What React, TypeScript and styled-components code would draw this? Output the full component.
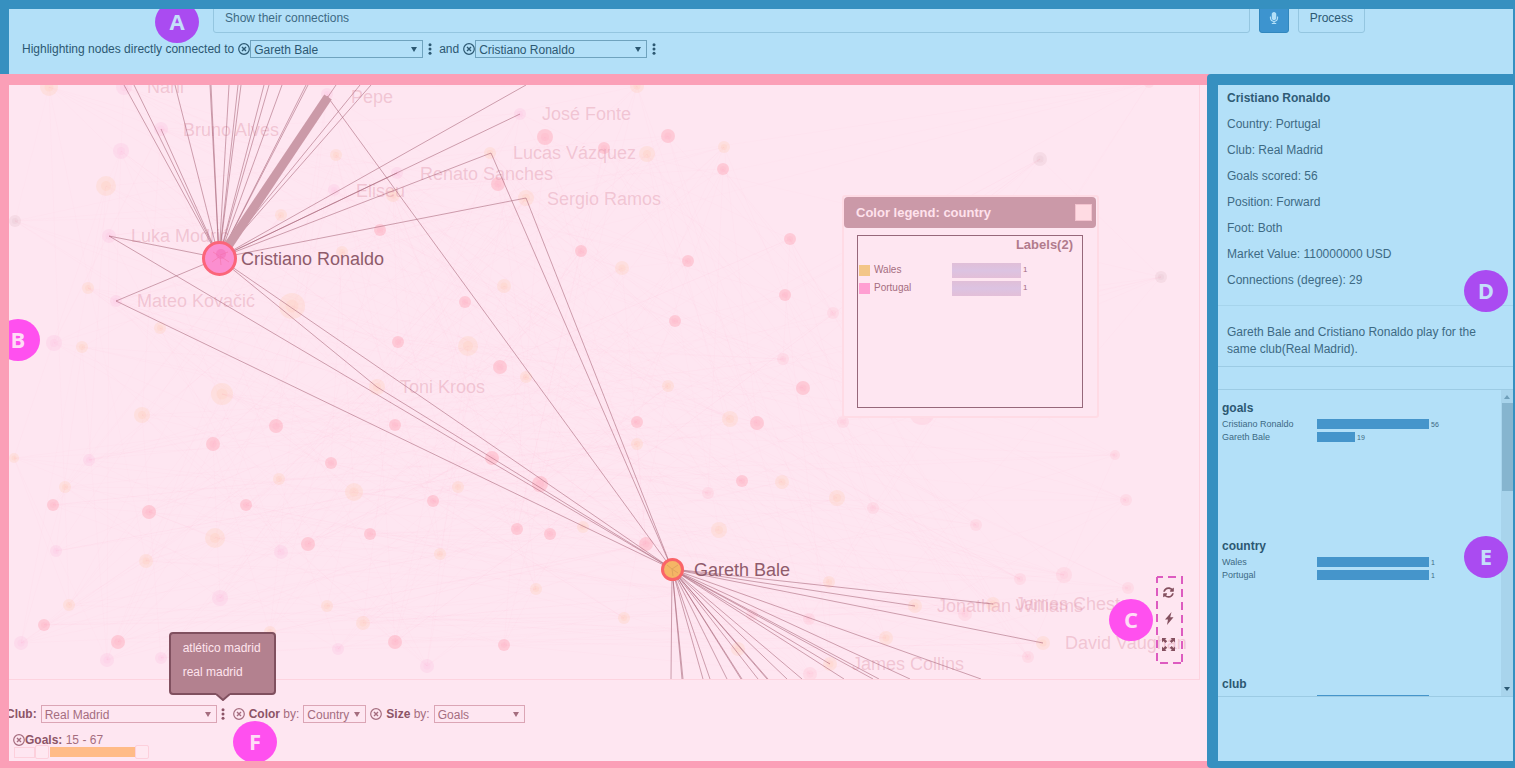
import React, { useState } from 'react';
import styled, { createGlobalStyle, css } from 'styled-components';
import { FaMicrophone, FaSyncAlt } from 'react-icons/fa';

const c = {
  blue: '#b3e0f8',
  blueEdge: '#3690c0',
  blueText: '#3d6a84',
  blueDark: '#2c5872',
  bar: '#4595cb',
  pink: '#fee6f1',
  pinkEdge: '#fb9fb7',
  pinkLine: '#fdd3df',
  pinkText: '#a56d7f',
  pinkDark: '#8c5466',
};

const GlobalStyle = createGlobalStyle`
  *, *::before, *::after { box-sizing: border-box; }
  body {
    margin: 0;
    font-family: "Liberation Sans", Arial, sans-serif;
    font-size: 12px;
    line-height: 18px;
  }
  button, input, select { font: inherit; color: inherit; margin: 0; }
`;

const Page = styled.div`
  display: flex;
  flex-direction: column;
  height: 100vh;
  overflow: hidden;
`;

const Header = styled.header`
  position: relative;
  flex: none;
  height: 74px;
  overflow: hidden;
  border: solid ${c.blueEdge};
  border-width: 9px 2px 0 9px;
  background: ${c.blue};
  color: ${c.blueDark};
`;

const QueryBar = styled.form`
  display: flex;
  gap: 9px;
  margin: -6px 148px 7px 204px;
`;

const QueryInput = styled.input`
  flex: 1;
  min-width: 0;
  height: 30px;
  padding: 0 11px;
  border: 1px solid #94c6e0;
  border-radius: 3px;
  background: transparent;
  color: ${c.blueText};
  outline: none;
`;

const MicButton = styled.button`
  display: flex;
  align-items: center;
  justify-content: center;
  width: 30px;
  height: 30px;
  padding: 0;
  border: 1px solid #3187be;
  border-radius: 3px;
  background: #3d94cf;
  color: ${c.blue};
`;

const ProcessButton = styled.button`
  height: 30px;
  padding: 0 11px;
  border: 1px solid #94c6e0;
  border-radius: 3px;
  background: transparent;
`;

const Line = styled.div`
  display: flex;
  align-items: center;
  height: 18px;
  white-space: nowrap;
`;

const HighlightLine = styled(Line)`
  gap: 3px;
  padding-left: 13px;
`;

const FilterLine = styled(Line)`
  gap: 4px;
  margin-left: -3px;
`;

const Lead = styled.span`
  padding-right: 1px;
`;

const Phrase = styled.span`
  padding: 0 1px 0 3px;
`;

const Pick = styled.span<{ $w: number; $edge: string }>`
  position: relative;
  flex: none;
  width: ${(p) => p.$w}px;
  height: 18px;
  border: 1px solid ${(p) => p.$edge};
  &::after {
    content: '';
    position: absolute;
    top: 6px;
    right: 5px;
    border: 3px solid transparent;
    border-top: 5px solid currentColor;
    border-bottom: 0;
    pointer-events: none;
  }
`;

const PickSelect = styled.select`
  display: block;
  width: 100%;
  height: 16px;
  padding: 0 3px;
  border: 0;
  border-radius: 0;
  background: transparent;
  appearance: none;
  outline: none;
`;

const IconButton = styled.button`
  display: flex;
  flex: none;
  align-items: center;
  justify-content: center;
  padding: 0;
  border: 0;
  background: none;
`;

const RemoveButton = styled(IconButton)`
  width: 12px;
  height: 12px;
`;

const TightRemove = styled(RemoveButton)`
  margin-right: -3px;
`;

const DotsButton = styled(IconButton)`
  width: 7px;
  height: 12px;
`;

const Badge = styled.span<{ $tone: 'violet' | 'pink' }>`
  position: absolute;
  z-index: 3;
  width: 44px;
  height: 42px;
  border-radius: 50%;
  font: 700 22px/40px "Open Sans", "Noto Sans", sans-serif;
  text-align: center;
  ${(p) =>
    p.$tone === 'violet'
      ? css`background: #aa4bf1; color: #c4def9;`
      : css`background: #ff50ef; color: #ffdcf6;`}
`;
const BadgeA = styled(Badge)`left: 146px; top: -8px;`;
const BadgeB = styled(Badge)`left: -13px; top: 234px;`;
const BadgeC = styled(Badge)`right: 46px; bottom: 38px;`;
const BadgeD = styled(Badge)`right: 5px; top: 185px;`;
const BadgeE = styled(Badge)`right: 5px; top: 451px;`;
const BadgeF = styled(Badge)`left: 224px; bottom: -2px;`;

const Main = styled.main`
  display: flex;
  flex: 1;
  min-height: 0;
  background: ${c.pinkEdge};
`;

const GraphPanel = styled.section`
  position: relative;
  display: flex;
  flex: 1;
  flex-direction: column;
  min-width: 0;
  overflow: hidden;
  border: solid ${c.pinkEdge};
  border-width: 11px 0 7px 9px;
  background: ${c.pink};
  color: ${c.pinkText};
`;

const Canvas = styled.div`
  position: relative;
  flex: 1;
  min-height: 0;
  margin-right: 7px;
  border: solid ${c.pinkLine};
  border-width: 0 1px 1px 0;
`;

const Graph = styled.svg`
  display: block;
  width: 100%;
  height: 100%;
`;

const Legend = styled.aside`
  position: absolute;
  z-index: 2;
  top: 110px;
  right: 100px;
  width: 257px;
  border: 2px solid #ffdbe5;
  border-radius: 3px;
  background: ${c.pink};
`;

const LegendTitle = styled.h2`
  display: flex;
  align-items: center;
  justify-content: space-between;
  height: 31px;
  margin: 0 1px 7px 0;
  padding: 0 4px 0 12px;
  border-radius: 4px;
  background: #cb99a8;
  color: #ffe2ec;
  font-size: 13px;
`;

const CloseButton = styled.button`
  width: 17px;
  height: 17px;
  padding: 0;
  border: 1px solid #f3c3cf;
  background: #ffdbe3;
`;

const LegendBox = styled.div`
  height: 173px;
  margin: 0 14px 8px 13px;
  border: 1px solid #96687a;
`;

const LegendHead = styled.h3`
  margin: 0 9px 7px 0;
  font-size: 13px;
  line-height: 18px;
  text-align: right;
  color: #b27b8c;
`;

const LegendRow = styled.div`
  display: flex;
  align-items: center;
  height: 18px;
  padding-left: 1px;
  font-size: 10px;
`;

const Swatch = styled.span<{ $fill: string }>`
  width: 11px;
  height: 11px;
  margin-right: 4px;
  background: ${(p) => p.$fill};
`;

const LegendName = styled.span`
  width: 78px;
`;

const LegendBar = styled.span`
  width: 69px;
  height: 15px;
  margin-right: 2px;
  background: linear-gradient(#e0bfd8, #dcc3e2 50%, #e3bfd8);
`;

const SmallValue = styled.span`
  font-size: 8px;
`;

const Tools = styled.div`
  position: absolute;
  z-index: 2;
  right: 16px;
  bottom: 15px;
  display: flex;
  flex-direction: column;
  align-items: center;
  gap: 11px;
  width: 28px;
  height: 88px;
  padding: 9px 1px 0 0;
  color: #84505f;
`;

const ToolsFrame = styled.svg`
  position: absolute;
  inset: 0;
`;

const ToolButton = styled(IconButton)`
  position: relative;
  width: 16px;
  height: 15px;
`;

const Filters = styled.footer`
  flex: none;
  padding: 25px 0 2px;
`;

const Strong = styled.b`
  color: ${c.pinkDark};
`;

const MenuAnchor = styled.span`
  position: relative;
  display: flex;
  width: 12px;
  justify-content: center;
  margin: 0 0 0 -4px;
  color: ${c.pinkDark};
`;

const Menu = styled.div`
  position: absolute;
  z-index: 4;
  bottom: 25px;
  left: -48px;
  width: 107px;
  height: 63px;
  padding: 2px 0 0 12px;
  border: 2px solid #80505f;
  border-radius: 4px;
  background: #b3818f;
  color: #ffe4ed;
  line-height: 24px;
`;

const MenuList = styled.ul`
  margin: 0;
  padding: 0;
  list-style: none;
`;

const MenuTail = styled.svg`
  position: absolute;
  top: 59px;
  left: 45px;
`;

const GoalsLine = styled(Line)`
  gap: 3px;
  margin: 8px 0 -4px;
  padding-left: 4px;
`;

const RangeTrack = styled.div`
  position: relative;
  display: flex;
  align-items: center;
  width: 135px;
  height: 14px;
  margin-left: 5px;
`;

const RangeRail = styled.span`
  width: 21px;
  height: 11px;
  border: 1px solid #fdd0dc;
`;

const RangeFill = styled.span`
  width: 85px;
  height: 10px;
  margin-left: 15px;
  background: #ffbb87;
`;

const RangeInput = styled.input`
  position: absolute;
  inset: 0;
  width: 100%;
  height: 14px;
  background: transparent;
  appearance: none;
  pointer-events: none;
  &::-webkit-slider-thumb {
    width: 14px;
    height: 14px;
    border: 1px solid #fdd0dc;
    border-radius: 2px;
    background: #ffe8f1;
    appearance: none;
    pointer-events: auto;
  }
`;

const Side = styled.aside`
  position: relative;
  display: flex;
  flex: none;
  flex-direction: column;
  width: 308px;
  overflow: hidden;
  border: solid ${c.blueEdge};
  border-width: 11px 2px 7px 11px;
  border-radius: 4px 0 0 4px;
  background: ${c.blue};
  color: ${c.blueText};
`;

const Facts = styled.ul`
  margin: 0 0 12px;
  padding: 0 0 0 9px;
  list-style: none;
  line-height: 26px;
`;

const FactTitle = styled.li`
  font-weight: 700;
  color: #2f5b75;
`;

const Note = styled.p`
  margin: 0 0 22px;
  padding: 18px 9px 8px;
  border: solid #9ccbe4;
  border-width: 1px 0;
  border-top-color: #a6d4ec;
  line-height: 17px;
`;

const ChartScroll = styled.div`
  display: flex;
  flex: 1;
  min-height: 0;
  margin-bottom: 64px;
  border: solid #9ccbe4;
  border-width: 1px 0;
`;

const ChartList = styled.div`
  flex: 1;
  min-width: 0;
  padding-left: 4px;
  overflow: hidden;
`;

const ScrollBar = styled.div`
  display: flex;
  flex: none;
  flex-direction: column;
  justify-content: space-between;
  width: 12px;
  background: #a8d4ec;
`;

const ScrollThumb = styled.div`
  flex: 0 0 88px;
  margin-left: 1px;
  background: #86b5cf;
`;

const ScrollSpace = styled.div`
  flex: 1;
`;

const ScrollArrow = styled.svg`
  flex: none;
  display: block;
  width: 12px;
  height: 13px;
`;

const ChartBlock = styled.section`
  height: 138px;
  padding-top: 9px;
`;

const ChartTitle = styled.h3`
  margin: 0;
  font-size: 12px;
  line-height: 18px;
  color: ${c.blueDark};
`;

const ChartRow = styled.div`
  display: flex;
  align-items: center;
  height: 13px;
  font-size: 9px;
  line-height: 13px;
`;

const ChartName = styled.span`
  width: 95px;
  padding-top: 2px;
`;

const ChartBar = styled.span`
  height: 10px;
  margin-right: 2px;
  background: ${c.bar};
`;

const ChartValue = styled.span`
  padding-top: 2px;
  font-size: 7px;
`;

type Node = [number, number, number];

const redNodes: Node[] = [
  [545, 137, 8], [604, 148, 6], [668, 136, 7], [723, 169, 6], [498, 184, 7], [380, 230, 6],
  [790, 239, 6], [581, 251, 6], [688, 261, 6], [465, 302, 6], [785, 295, 6], [398, 342, 6],
  [675, 321, 6], [500, 367, 7], [803, 388, 7], [395, 425, 6], [637, 422, 6], [757, 423, 7],
  [276, 426, 7], [213, 444, 7], [331, 463, 6], [492, 458, 7], [540, 484, 8], [742, 481, 6],
  [53, 505, 6], [149, 512, 7], [246, 505, 6], [433, 501, 6], [517, 529, 6], [550, 534, 6],
  [370, 534, 6], [308, 544, 7], [646, 544, 7], [44, 625, 6], [118, 642, 7], [395, 642, 7],
  [504, 645, 6],
];
const roseNodes: Node[] = [
  [833, 313, 6], [783, 359, 6], [843, 422, 6], [922, 412, 13], [708, 493, 6], [873, 508, 6],
  [976, 525, 6], [1115, 455, 5], [1126, 500, 6], [1020, 579, 6], [1064, 575, 8], [1128, 588, 6],
  [1028, 657, 6], [809, 619, 6], [752, 615, 6], [810, 674, 7], [965, 614, 7], [1149, 83, 5],
];
const magentaNodes: Node[] = [
  [124, 87, 8], [161, 129, 7], [121, 151, 8], [109, 236, 7], [116, 301, 6], [54, 343, 8],
  [89, 460, 6], [56, 551, 6], [281, 552, 7], [220, 598, 8], [21, 643, 7], [107, 660, 7],
  [161, 658, 6], [338, 649, 6], [427, 666, 7], [397, 173, 6], [334, 190, 6], [520, 114, 6],
  [327, 94, 6],
];
const orangeNodes: Node[] = [
  [49, 87, 9], [106, 186, 10], [336, 155, 6], [393, 195, 7], [281, 215, 6], [342, 252, 6],
  [490, 153, 6], [526, 198, 8], [637, 86, 7], [647, 154, 8], [724, 147, 6], [622, 268, 7],
  [504, 286, 7], [468, 346, 10], [292, 306, 13], [88, 288, 6], [82, 347, 6], [160, 328, 6],
  [222, 394, 11], [142, 415, 8], [377, 387, 8], [14, 458, 5], [65, 487, 6], [279, 479, 6],
  [354, 492, 9], [458, 487, 6], [526, 377, 6], [668, 386, 6], [730, 419, 8], [637, 444, 6],
  [782, 482, 7], [837, 498, 8], [215, 538, 10], [146, 561, 7], [440, 554, 6], [583, 527, 6],
  [719, 530, 8], [536, 589, 6], [624, 618, 6], [829, 582, 6], [69, 605, 6], [327, 606, 6],
  [363, 623, 7], [915, 606, 7], [993, 604, 7], [1043, 643, 7], [830, 664, 7], [886, 638, 7],
  [738, 649, 7], [270, 632, 6],
];
const greyNodes: Node[] = [[1040, 159, 7], [1161, 277, 6], [15, 221, 6]];

const groups: { fill: string; opacity: number; core: number; nodes: Node[] }[] = [
  { fill: '#ff9fb2', opacity: 0.4, core: 0.12, nodes: redNodes },
  { fill: '#ffb0c4', opacity: 0.2, core: 0.12, nodes: roseNodes },
  { fill: '#fba4d6', opacity: 0.17, core: 0.1, nodes: magentaNodes },
  { fill: '#ffc089', opacity: 0.17, core: 0.12, nodes: orangeNodes },
  { fill: '#c49aa4', opacity: 0.14, core: 0.1, nodes: greyNodes },
];

const ronaldo: [number, number] = [219, 258];
const bale: [number, number] = [672, 569];
const shared: [number, number][] = [[109, 236], [116, 301], [377, 387], [491, 153], [526, 198]];

const ronaldoEnds: [number, number][] = [
  [124, 85], [134, 85], [161, 129], [175, 85], [210, 85], [211, 85], [229, 85], [238, 85],
  [241, 85], [264, 85], [269, 85], [282, 85], [306, 85], [308, 85], [336, 85], [360, 85],
  [371, 85], [526, 85], [520, 114], [397, 173], ...shared, bale,
];
const baleEnds: [number, number][] = [
  [327, 96], ...shared, [915, 606], [993, 604], [1043, 643], [830, 664], [671, 679],
  [682, 679], [683, 679], [703, 679], [710, 679], [727, 679], [741, 679], [742, 679],
  [758, 679], [767, 679], [768, 679], [787, 679], [802, 679], [844, 679], [873, 679],
  [879, 679], [910, 679], [981, 679],
];

const labels: [string, number, number][] = [
  ['Nani', 147, 87], ['Bruno Alves', 183, 130], ['Pepe', 351, 97], ['José Fonte', 542, 114],
  ['Lucas Vázquez', 513, 153], ['Renato Sanches', 420, 174], ['Eliseu', 356, 191],
  ['Sergio Ramos', 547, 199], ['Luka Modrić', 131, 236], ['Mateo Kovačić', 137, 301],
  ['Toni Kroos', 400, 387], ['Jonathan Williams', 937, 606], ['James Chester', 1015, 604],
  ['David Vaughan', 1065, 643], ['James Collins', 852, 664],
];

const allNodes = groups.flatMap((g) => g.nodes);
const webEdges = allNodes.flatMap((a, i) =>
  [7, 19, 31, 44].map((step) => [a, allNodes[(i * 3 + step) % allNodes.length]] as const),
);

function NetworkGraph() {
  return (
    <Graph role="img" aria-label="Network of football players">
      <g transform="translate(-9 -85)">
        <g stroke="#f3a5b9" strokeOpacity="0.03">
          {webEdges.map(([a, b], i) => (
            <line key={i} x1={a[0]} y1={a[1]} x2={b[0]} y2={b[1]} />
          ))}
        </g>
        {groups.map((g) => (
          <g key={g.fill} fill={g.fill}>
            {g.nodes.map(([x, y, r]) => (
              <g key={`${x}-${y}`}>
                <circle cx={x} cy={y} r={r} opacity={g.opacity} />
                <circle cx={x} cy={y} r={r / 2} opacity={g.core} />
              </g>
            ))}
          </g>
        ))}
        <g fontSize="18" fill="#dc8ea3" fillOpacity="0.38">
          {labels.map(([name, x, y]) => (
            <text key={name} x={x} y={y + 6}>{name}</text>
          ))}
        </g>
        <g stroke="#a9687a" strokeOpacity="0.58">
          {ronaldoEnds.map(([x, y]) => (
            <line key={`r${x}-${y}`} x1={ronaldo[0]} y1={ronaldo[1]} x2={x} y2={y} />
          ))}
          {baleEnds.map(([x, y]) => (
            <line key={`b${x}-${y}`} x1={bale[0]} y1={bale[1]} x2={x} y2={y} />
          ))}
        </g>
        <line x1="220" y1="258" x2="328" y2="97" stroke="#cb9aa8" strokeWidth="9" />
        <circle cx="219.5" cy="258.5" r="16" fill="#fb8fd0" stroke="#fb6579" strokeWidth="3" />
        <path d="M219 256l-6-4m7 3l8-3m-8 4l1 9m-1-9l9 6m-10-5l-7 5" stroke="#f77fb8" fill="none" />
        <circle cx="221" cy="254" r="5" fill="#f46cb4" opacity="0.5" />
        <circle cx="672.5" cy="569.5" r="10" fill="#f5b565" stroke="#fa6468" strokeWidth="3" />
        <path d="M672 569l-5-4m5 4l6-4m-6 4l1 7m-1-7l6 4" stroke="#e0a45e" fill="none" />
        <g fontSize="18" fill="#8f5b6b">
          <text x="241" y="265">Cristiano Ronaldo</text>
          <text x="694" y="576">Gareth Bale</text>
        </g>
      </g>
    </Graph>
  );
}

function RemoveIcon() {
  return (
    <svg width="12" height="12" viewBox="0 0 12 12" fill="none" stroke="currentColor">
      <circle cx="6" cy="6" r="5.3" strokeWidth="1.2" />
      <path d="M4 4l4 4M8 4l-4 4" strokeWidth="1.4" />
    </svg>
  );
}

function DotsIcon() {
  return (
    <svg width="4" height="12" viewBox="0 0 4 12" fill="currentColor">
      <circle cx="2" cy="1.7" r="1.5" />
      <circle cx="2" cy="6" r="1.5" />
      <circle cx="2" cy="10.3" r="1.5" />
    </svg>
  );
}

function Dropdown(props: { label: string; width: number; edge: string; options: string[] }) {
  return (
    <Pick $w={props.width} $edge={props.edge}>
      <PickSelect aria-label={props.label} defaultValue={props.options[0]}>
        {props.options.map((o) => (
          <option key={o}>{o}</option>
        ))}
      </PickSelect>
    </Pick>
  );
}

const facts = [
  'Country: Portugal', 'Club: Real Madrid', 'Goals scored: 56', 'Position: Forward',
  'Foot: Both', 'Market Value: 110000000 USD', 'Connections (degree): 29',
];

const charts: { title: string; max: number; rows: [string, number][] }[] = [
  { title: 'goals', max: 56, rows: [['Cristiano Ronaldo', 56], ['Gareth Bale', 19]] },
  { title: 'country', max: 1, rows: [['Wales', 1], ['Portugal', 1]] },
  { title: 'club', max: 2, rows: [['', 2]] },
];

export default function App() {
  const [low, setLow] = useState(15);
  const [high, setHigh] = useState(67);
  const [query, setQuery] = useState('Show their connections');
  const blueBox = '#6fa3be';
  const pinkBox = '#dba5b5';

  return (
    <Page>
      <GlobalStyle />
      <Header>
        <BadgeA $tone="violet">A</BadgeA>
        <QueryBar onSubmit={(e) => e.preventDefault()}>
          <QueryInput aria-label="Query" value={query} onChange={(e) => setQuery(e.target.value)} />
          <MicButton type="button" aria-label="Speak"><FaMicrophone size={12} /></MicButton>
          <ProcessButton>Process</ProcessButton>
        </QueryBar>
        <HighlightLine>
          <Lead>Highlighting nodes directly connected to</Lead>
          <TightRemove aria-label="Remove first player"><RemoveIcon /></TightRemove>
          <Dropdown label="First player" width={173} edge={blueBox} options={['Gareth Bale', 'Cristiano Ronaldo']} />
          <DotsButton aria-label="First player options"><DotsIcon /></DotsButton>
          <Phrase>and</Phrase>
          <TightRemove aria-label="Remove second player"><RemoveIcon /></TightRemove>
          <Dropdown label="Second player" width={172} edge={blueBox} options={['Cristiano Ronaldo', 'Gareth Bale']} />
          <DotsButton aria-label="Second player options"><DotsIcon /></DotsButton>
        </HighlightLine>
      </Header>

      <Main>
        <GraphPanel>
          <BadgeB $tone="pink">B</BadgeB>
          <Canvas>
            <NetworkGraph />
            <Legend>
              <LegendTitle>
                Color legend: country
                <CloseButton aria-label="Close legend" />
              </LegendTitle>
              <LegendBox>
                <LegendHead>Labels(2)</LegendHead>
                <LegendRow>
                  <Swatch $fill="#f3c688" />
                  <LegendName>Wales</LegendName>
                  <LegendBar />
                  <SmallValue>1</SmallValue>
                </LegendRow>
                <LegendRow>
                  <Swatch $fill="#ff9fd2" />
                  <LegendName>Portugal</LegendName>
                  <LegendBar />
                  <SmallValue>1</SmallValue>
                </LegendRow>
              </LegendBox>
            </Legend>
            <BadgeC $tone="pink">C</BadgeC>
            <Tools>
              <ToolsFrame width="28" height="88" fill="none" stroke="#dd5bc0" strokeWidth="2">
                <path d="M2 1H27V87" strokeDasharray="8 5" strokeDashoffset="2" />
                <path d="M2 1V87H27" strokeDasharray="8 5" strokeDashoffset="2" />
              </ToolsFrame>
              <ToolButton aria-label="Refresh layout"><FaSyncAlt size={11} /></ToolButton>
              <ToolButton aria-label="Run layout">
                <svg width="10" height="13" viewBox="0 0 10 13" fill="currentColor">
                  <path d="M7.5 0L1 7.5h3L3 13l6.5-7.8H6.2z" />
                </svg>
              </ToolButton>
              <ToolButton aria-label="Fit to screen">
                <svg width="13" height="13" viewBox="0 0 13 13" fill="currentColor">
                  <path d="M0 0h4.500L3.200 1.200l2 2-1.800 1.800-2-2L0 4.500zM13 0v4.500l-1.400-1.500-2 2-1.800-1.800 2-2L8.500 0zM0 13V8.500l1.400 1.500 2-2 1.800 1.800-2 2L4.500 13zM13 13H8.500l1.300-1.200-2-2 1.800-1.800 2 2L13 8.500z" />
                </svg>
              </ToolButton>
            </Tools>
          </Canvas>

          <Filters>
            <FilterLine>
              <Strong>Club:</Strong>
              <Dropdown label="Club" width={176} edge={pinkBox} options={['Real Madrid', 'Atlético Madrid']} />
              <MenuAnchor>
                <DotsButton aria-label="Club options"><DotsIcon /></DotsButton>
                <Menu>
                  <MenuList>
                    <li>atlético madrid</li>
                    <li>real madrid</li>
                  </MenuList>
                  <MenuTail width="14" height="8" viewBox="0 0 14 8" aria-hidden="true">
                    <path d="M0 0h14v1L7 7 0 1z" fill="#b3818f" />
                    <path d="M0 1l7 6 7-6" fill="none" stroke="#80505f" strokeWidth="2" />
                  </MenuTail>
                </Menu>
              </MenuAnchor>
              <RemoveButton aria-label="Remove color"><RemoveIcon /></RemoveButton>
              <span><Strong>Color</Strong> by:</span>
              <Dropdown label="Color by" width={63} edge={pinkBox} options={['Country', 'Club']} />
              <RemoveButton aria-label="Remove size"><RemoveIcon /></RemoveButton>
              <span><Strong>Size</Strong> by:</span>
              <Dropdown label="Size by" width={91} edge={pinkBox} options={['Goals', 'Degree']} />
            </FilterLine>
            <GoalsLine>
              <TightRemove aria-label="Remove goals filter"><RemoveIcon /></TightRemove>
              <span><Strong>Goals:</Strong> {low} - {high}</span>
            </GoalsLine>
            <RangeTrack>
              <RangeRail />
              <RangeFill />
              <RangeInput type="range" aria-label="Fewest goals" min={4} max={67} value={low}
                onChange={(e) => setLow(Number(e.target.value))} />
              <RangeInput type="range" aria-label="Most goals" min={4} max={67} value={high}
                onChange={(e) => setHigh(Number(e.target.value))} />
            </RangeTrack>
          </Filters>
          <BadgeF $tone="pink">F</BadgeF>
        </GraphPanel>

        <Side>
          <Facts>
            <FactTitle>Cristiano Ronaldo</FactTitle>
            {facts.map((f) => (
              <li key={f}>{f}</li>
            ))}
          </Facts>
          <Note>Gareth Bale and Cristiano Ronaldo play for the same club(Real Madrid).</Note>
          <ChartScroll>
            <ChartList>
              {charts.map((chart) => (
                <ChartBlock key={chart.title}>
                  <ChartTitle>{chart.title}</ChartTitle>
                  {chart.rows.map(([name, value]) => (
                    <ChartRow key={name}>
                      <ChartName>{name}</ChartName>
                      <ChartBar style={{ width: Math.round((112 * value) / chart.max) }} />
                      <ChartValue>{value}</ChartValue>
                    </ChartRow>
                  ))}
                </ChartBlock>
              ))}
            </ChartList>
            <ScrollBar aria-hidden="true">
              <ScrollArrow><path d="M3 9l3-4 3 4z" fill="#6f9fba" /></ScrollArrow>
              <ScrollThumb />
              <ScrollSpace />
              <ScrollArrow><path d="M3 4h6l-3 4z" fill="#2c5973" /></ScrollArrow>
            </ScrollBar>
          </ChartScroll>
          <BadgeD $tone="violet">D</BadgeD>
          <BadgeE $tone="violet">E</BadgeE>
        </Side>
      </Main>
    </Page>
  );
}
